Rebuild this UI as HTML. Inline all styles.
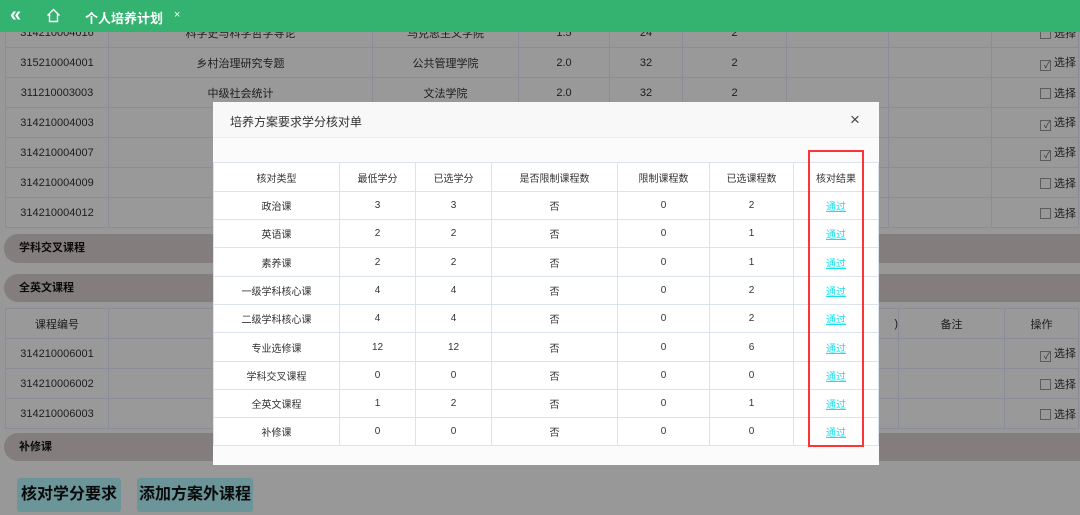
<!DOCTYPE html>
<html><head><meta charset="utf-8"><style>
*{margin:0;padding:0;box-sizing:border-box}
html,body{background:#fff}
body{width:1080px;height:515px;overflow:hidden;position:relative;font-family:"Liberation Sans","Noto Sans CJK SC",sans-serif;font-size:11px;color:#222}
.a{position:absolute}
.page{left:0;top:0;width:1080px;height:515px;background:#fdfdfd}
.shade{left:0;top:0;width:1080px;height:515px;background:rgba(0,0,0,0.4);z-index:2}
.top{left:0;top:0;width:1080px;height:32px;background:#33b36f;color:#fff;z-index:5}
table{border-collapse:collapse;position:absolute}
.bg td{border:1px solid #e6ecfd;text-align:center;height:30px;color:#333;background:#fff}
.sec{left:4px;width:1076px;background:#dcd0d0;border-radius:14px 0 0 14px;font-weight:bold;font-size:11px;padding-left:15px;color:#111}
.btn{top:478px;height:34px;background:#b4f8ff;border-radius:3px;font-size:16px;font-weight:bold;color:#111;line-height:34px;text-align:center}
.cb{display:inline-block;width:11px;height:11px;border:1px solid #999;background:#fff;vertical-align:-2px;margin-right:3px;font-size:9px;line-height:9px;color:#556}
.modal{left:213px;top:102px;width:666px;height:363px;background:#fff;z-index:3}
.mt td{border:1px solid #dde2ef;text-align:center;color:#333;font-size:10px}
.ok{color:#17e0f0;text-decoration:underline}
</style></head><body>
<div class="a page"></div>
<div class="a shade"></div>
<div class="a top">
<div class="a" style="left:10px;top:4px;font-size:20px;font-weight:bold">«</div>
<svg class="a" style="left:46px;top:8px" width="15" height="15" viewBox="0 0 15 15"><path d="M1.5 7.5L7.5 1.5L13.5 7.5M3.5 6v7.5h8V6" fill="none" stroke="#fff" stroke-width="1.4"/></svg>
<div class="a" style="left:85px;top:8px;font-size:13px;font-weight:bold">个人培养计划</div>
<div class="a" style="left:174px;top:9px;font-size:11px">×</div>
</div>
<table class="bg" style="left:5px;top:17px;width:1074px">
<colgroup><col style="width:103px"><col style="width:264px"><col style="width:146px"><col style="width:91px"><col style="width:73px"><col style="width:104px"><col style="width:102px"><col style="width:103px"><col></colgroup>
<tr><td>314210004016</td><td>科学史与科学哲学导论</td><td>马克思主义学院</td><td>1.5</td><td>24</td><td>2</td><td></td><td></td><td style="text-align:right;padding-right:2px"><span class="cb"></span>选择</td></tr>
<tr><td>315210004001</td><td>乡村治理研究专题</td><td>公共管理学院</td><td>2.0</td><td>32</td><td>2</td><td></td><td></td><td style="text-align:right;padding-right:2px"><span class="cb">✓</span>选择</td></tr>
<tr><td>311210003003</td><td>中级社会统计</td><td>文法学院</td><td>2.0</td><td>32</td><td>2</td><td></td><td></td><td style="text-align:right;padding-right:2px"><span class="cb"></span>选择</td></tr>
<tr><td>314210004003</td><td>当</td><td></td><td></td><td></td><td></td><td></td><td></td><td style="text-align:right;padding-right:2px"><span class="cb">✓</span>选择</td></tr>
<tr><td>314210004007</td><td>当代</td><td></td><td></td><td></td><td></td><td></td><td></td><td style="text-align:right;padding-right:2px"><span class="cb">✓</span>选择</td></tr>
<tr><td>314210004009</td><td>中国</td><td></td><td></td><td></td><td></td><td></td><td></td><td style="text-align:right;padding-right:2px"><span class="cb"></span>选择</td></tr>
<tr><td>314210004012</td><td>西</td><td></td><td></td><td></td><td></td><td></td><td></td><td style="text-align:right;padding-right:2px"><span class="cb"></span>选择</td></tr>
</table>
<div class="a sec" style="top:234px;height:29px;line-height:29px">学科交叉课程</div>
<div class="a sec" style="top:274px;height:28px;line-height:28px">全英文课程</div>
<table class="bg" style="left:5px;top:308px;width:1074px">
<colgroup><col style="width:103px"><col style="width:264px"><col style="width:526px"><col style="width:106px"><col></colgroup>
<tr><td style="height:28px">课程编号</td><td></td><td style="text-align:right">)</td><td>备注</td><td>操作</td></tr>
<tr><td>314210006001</td><td style="text-align:right">青</td><td></td><td></td><td style="text-align:right;padding-right:2px"><span class="cb">✓</span>选择</td></tr>
<tr><td>314210006002</td><td style="text-align:right">中国</td><td></td><td></td><td style="text-align:right;padding-right:2px"><span class="cb"></span>选择</td></tr>
<tr><td>314210006003</td><td style="text-align:right">国外马</td><td></td><td></td><td style="text-align:right;padding-right:2px"><span class="cb"></span>选择</td></tr>
</table>
<div class="a sec" style="top:433px;height:28px;line-height:28px">补修课</div>
<div class="a btn" style="left:17px;width:104px">核对学分要求</div>
<div class="a btn" style="left:137px;width:116px">添加方案外课程</div>

<div class="a modal">
<div class="a" style="left:0;top:0;width:666px;height:36px;background:#f8f8f8;border-bottom:1px solid #eee"></div>
<div class="a" style="left:17px;top:11px;font-size:12px;color:#333">培养方案要求学分核对单</div>
<div class="a" style="left:637px;top:8px;font-size:17px;color:#444">×</div>
<div class="a" style="left:0;top:36px;width:666px;height:24px;background:#fbfbfb"></div>
<div class="a" style="left:0;top:343px;width:666px;height:20px;background:#fbfbfb"></div>
<table class="mt" style="left:0;top:60px;width:666px">
<colgroup><col style="width:126px"><col style="width:76px"><col style="width:76px"><col style="width:126px"><col style="width:92px"><col style="width:84px"><col></colgroup>
<tr style="height:29px"><td>核对类型</td><td>最低学分</td><td>已选学分</td><td>是否限制课程数</td><td>限制课程数</td><td>已选课程数</td><td>核对结果</td></tr>
<tr style="height:28px"><td>政治课</td><td>3</td><td>3</td><td>否</td><td>0</td><td>2</td><td><span class="ok">通过</span></td></tr>
<tr style="height:28px"><td>英语课</td><td>2</td><td>2</td><td>否</td><td>0</td><td>1</td><td><span class="ok">通过</span></td></tr>
<tr style="height:29px"><td>素养课</td><td>2</td><td>2</td><td>否</td><td>0</td><td>1</td><td><span class="ok">通过</span></td></tr>
<tr style="height:28px"><td>一级学科核心课</td><td>4</td><td>4</td><td>否</td><td>0</td><td>2</td><td><span class="ok">通过</span></td></tr>
<tr style="height:28px"><td>二级学科核心课</td><td>4</td><td>4</td><td>否</td><td>0</td><td>2</td><td><span class="ok">通过</span></td></tr>
<tr style="height:29px"><td>专业选修课</td><td>12</td><td>12</td><td>否</td><td>0</td><td>6</td><td><span class="ok">通过</span></td></tr>
<tr style="height:28px"><td>学科交叉课程</td><td>0</td><td>0</td><td>否</td><td>0</td><td>0</td><td><span class="ok">通过</span></td></tr>
<tr style="height:28px"><td>全英文课程</td><td>1</td><td>2</td><td>否</td><td>0</td><td>1</td><td><span class="ok">通过</span></td></tr>
<tr style="height:28px"><td>补修课</td><td>0</td><td>0</td><td>否</td><td>0</td><td>0</td><td><span class="ok">通过</span></td></tr>
</table>
</div>
<div class="a" style="left:808px;top:150px;width:56px;height:297px;border:2px solid #f33;z-index:4"></div>
</body></html>
